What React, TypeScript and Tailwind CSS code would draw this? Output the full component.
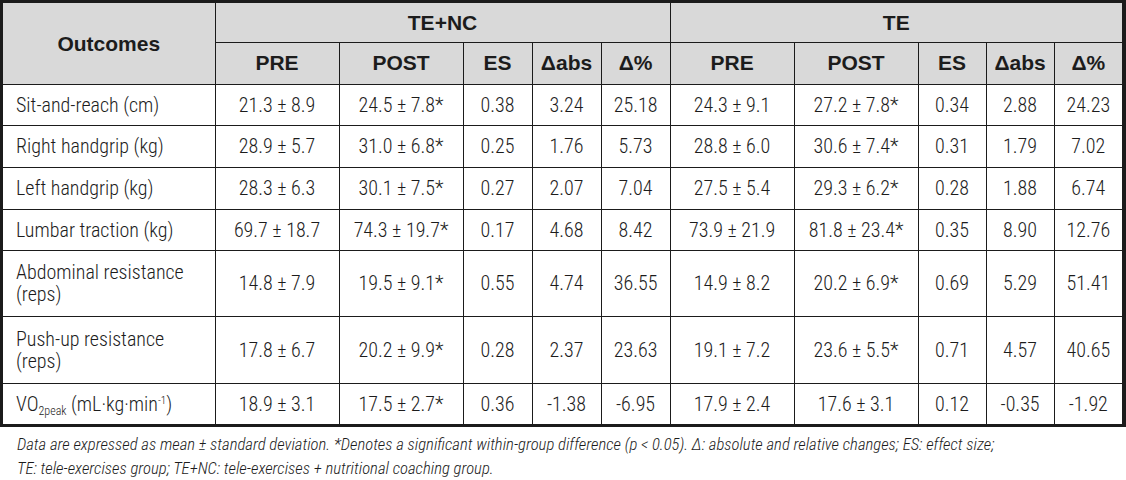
type Row = {
  label: React.ReactNode;
  h: string;
  a: string[];
  b: string[];
};

const rows: Row[] = [
  { label: "Sit-and-reach (cm)", h: "h-[41px]", a: ["21.3 ± 8.9", "24.5 ± 7.8*", "0.38", "3.24", "25.18"], b: ["24.3 ± 9.1", "27.2 ± 7.8*", "0.34", "2.88", "24.23"] },
  { label: "Right handgrip (kg)", h: "h-[42px]", a: ["28.9 ± 5.7", "31.0 ± 6.8*", "0.25", "1.76", "5.73"], b: ["28.8 ± 6.0", "30.6 ± 7.4*", "0.31", "1.79", "7.02"] },
  { label: "Left handgrip (kg)", h: "h-[42px]", a: ["28.3 ± 6.3", "30.1 ± 7.5*", "0.27", "2.07", "7.04"], b: ["27.5 ± 5.4", "29.3 ± 6.2*", "0.28", "1.88", "6.74"] },
  { label: "Lumbar traction (kg)", h: "h-[41px]", a: ["69.7 ± 18.7", "74.3 ± 19.7*", "0.17", "4.68", "8.42"], b: ["73.9 ± 21.9", "81.8 ± 23.4*", "0.35", "8.90", "12.76"] },
  {
    label: (
      <>
        Abdominal resistance
        <br />
        (reps)
      </>
    ),
    h: "h-[66px]",
    a: ["14.8 ± 7.9", "19.5 ± 9.1*", "0.55", "4.74", "36.55"],
    b: ["14.9 ± 8.2", "20.2 ± 6.9*", "0.69", "5.29", "51.41"],
  },
  {
    label: (
      <>
        Push-up resistance
        <br />
        (reps)
      </>
    ),
    h: "h-[67px]",
    a: ["17.8 ± 6.7", "20.2 ± 9.9*", "0.28", "2.37", "23.63"],
    b: ["19.1 ± 7.2", "23.6 ± 5.5*", "0.71", "4.57", "40.65"],
  },
  {
    label: (
      <>
        VO<sub className="text-[12px] relative top-[4px] align-baseline">2peak</sub> (mL·kg·min
        <sup className="text-[11px] align-baseline relative -top-[7px]">-1</sup>)
      </>
    ),
    h: "h-[41px]",
    a: ["18.9 ± 3.1", "17.5 ± 2.7*", "0.36", "-1.38", "-6.95"],
    b: ["17.9 ± 2.4", "17.6 ± 3.1", "0.12", "-0.35", "-1.92"],
  },
];

const sub = ["PRE", "POST", "ES", "Δabs", "Δ%"];

export default function App() {
  return (
    <div className="w-[1126px] h-[480px] bg-white text-[#1c1c1c]">
      <div className="border-[3px] border-r-[4px] border-[#1b1b1b]">
        <table className="w-full table-fixed border-collapse border-hidden">
          <colgroup>
            <col className="w-[212px]" />
            <col className="w-[124px]" />
            <col className="w-[124px]" />
            <col className="w-[69px]" />
            <col className="w-[69px]" />
            <col className="w-[69px]" />
            <col className="w-[124px]" />
            <col className="w-[124px]" />
            <col className="w-[68px]" />
            <col className="w-[68px]" />
            <col />
          </colgroup>
          <thead className="bg-[#d9d9d9] font-['Liberation_Sans',Arial,sans-serif] font-bold text-[21px]">
            <tr className="h-[39px]">
              <th rowSpan={2} className="border border-[#1b1b1b] text-center">
                Outcomes
              </th>
              <th colSpan={5} className="border border-[#1b1b1b] text-center">
                TE+NC
              </th>
              <th colSpan={5} className="border border-[#1b1b1b] text-center">
                TE
              </th>
            </tr>
            <tr className="h-[42px]">
              {[...sub, ...sub].map((s, i) => (
                <th key={i} className="border border-[#1b1b1b] text-center">
                  {s}
                </th>
              ))}
            </tr>
          </thead>
          <tbody className="font-['Roboto_Condensed',sans-serif] font-light text-[20px] leading-[22px]">
            {rows.map((r, i) => (
              <tr key={i} className={r.h}>
                <td className="border border-[#1b1b1b] pl-[13px] text-left">{r.label}</td>
                {[...r.a, ...r.b].map((v, j) => (
                  <td key={j} className="border border-[#1b1b1b] text-center">
                    {v}
                  </td>
                ))}
              </tr>
            ))}
          </tbody>
        </table>
      </div>
      <div className="pl-[17px] pt-[6px] font-['Roboto_Condensed',sans-serif] font-light italic text-[16.7px] leading-[24px] text-[#1c1c1c]">
        <p>
          Data are expressed as mean ± standard deviation. *Denotes a significant within-group difference (p &lt; 0.05). Δ: absolute and relative changes; ES: effect size;
        </p>
        <p>TE: tele-exercises group; TE+NC: tele-exercises + nutritional coaching group.</p>
      </div>
    </div>
  );
}
